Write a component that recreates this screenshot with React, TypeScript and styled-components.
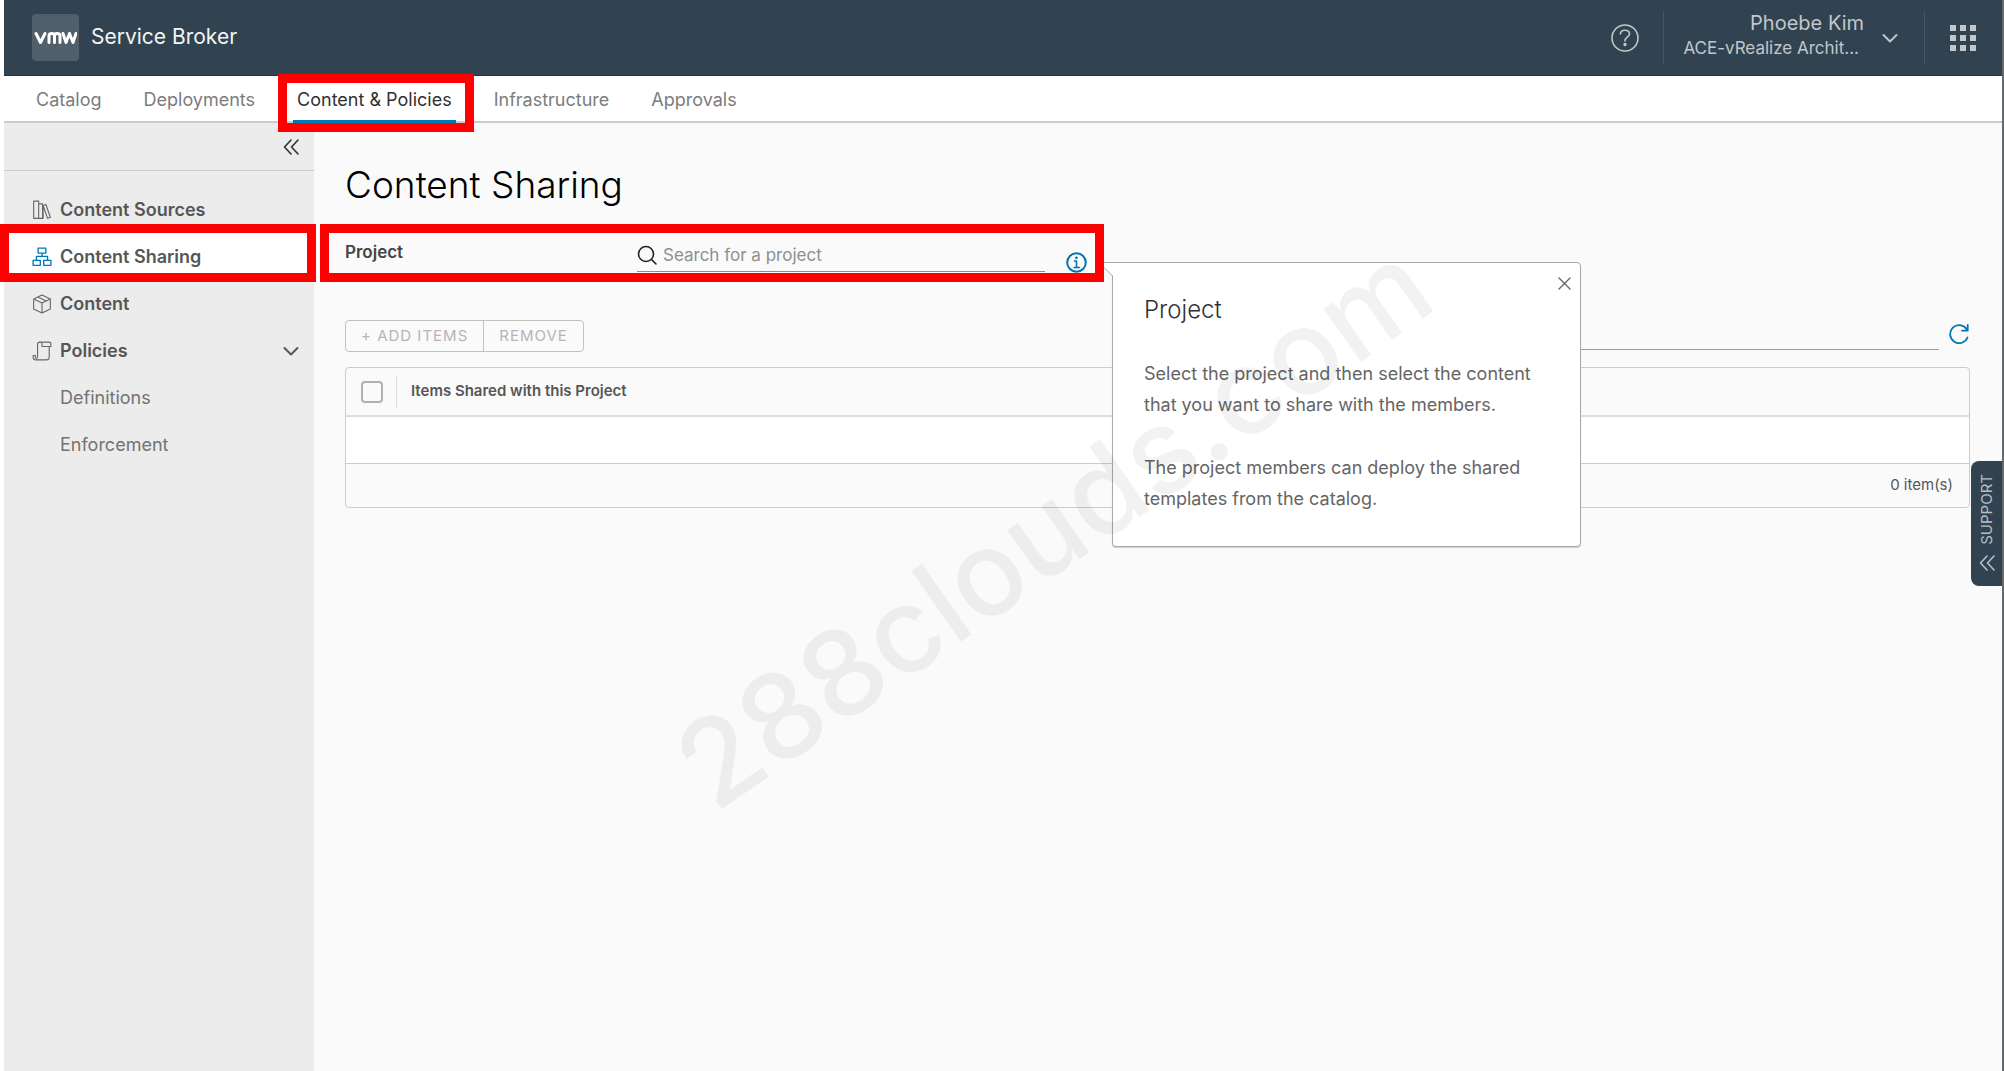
import React from "react";
import styled, { createGlobalStyle, css } from "styled-components";

const GlobalStyle = createGlobalStyle`
  *, *::before, *::after { box-sizing: border-box; }
  body {
    margin: 0;
    background: #ffffff;
    color: #565656;
    font-family: Inter, "Open Sans", "Liberation Sans", sans-serif;
    font-size: 17px;
    line-height: 24px;
  }
  button, input { font: inherit; color: inherit; }
  button { background: none; border: 0; padding: 0; cursor: pointer; }
  a { color: inherit; text-decoration: none; }
  svg { display: block; flex: none; }
`;

const Shell = styled.div`
  position: relative;
  display: flex;
  flex-direction: column;
  min-height: 100vh;
  border-left: 4px solid #ffffff;
  border-right: 2px solid #68696b;
`;

const Header = styled.header`
  display: flex;
  align-items: center;
  height: 76px;
  padding: 0 26px 0 28px;
  background: #314351;
  border-bottom: 1px solid #25333d;
  color: #c1c7cb;
`;

const Logo = styled.span`
  display: flex;
  align-items: center;
  justify-content: center;
  width: 47px;
  height: 47px;
  border-radius: 4px;
  background: #515f6b;
`;

const ProductName = styled.span`
  margin-left: 12px;
  padding-bottom: 2px;
  color: #f3f4f5;
  font-size: 21px;
`;

const HeaderActions = styled.div`
  display: flex;
  align-items: center;
  margin-left: auto;
`;

const Divider = styled.span`
  width: 1px;
  height: 52px;
  background: #475763;
`;

const HelpButton = styled.button`
  margin-right: 24px;
`;

const UserButton = styled.button`
  display: flex;
  align-items: center;
  gap: 18px;
  width: 260px;
  justify-content: flex-end;
  padding-right: 26px;
  text-align: right;
`;

const UserNames = styled.span`
  display: flex;
  flex-direction: column;
  padding-bottom: 3px;
`;

const UserName = styled.span`
  font-size: 20px;
  line-height: 25px;
`;

const OrgName = styled.span`
  padding-right: 5px;
  font-size: 17px;
  line-height: 25px;
`;

const AppsButton = styled.button`
  margin-left: 25px;
`;

const highlight = css`
  &::after {
    content: "";
    position: absolute;
    z-index: 3;
    border: 9px solid #ff0000;
    pointer-events: none;
  }
`;

const Tabs = styled.nav`
  display: flex;
  gap: 34px;
  height: 47px;
  padding: 0 28px;
  background: #ffffff;
  border-bottom: 2px solid #cccccc;
`;

const Tab = styled.a<{ $active?: boolean }>`
  position: relative;
  padding: 0 4px;
  line-height: 47px;
  font-size: 18px;
  color: ${(p) => (p.$active ? "#313131" : "#7c7c7c")};
  ${(p) =>
    p.$active &&
    css`
      box-shadow: inset 0 -3px 0 #0079b8;
      height: 47px;
      ${highlight}
      &::after {
        inset: -2px -18px -9px -15px;
      }
    `}
`;

const Body = styled.div`
  display: flex;
  flex: 1;
`;

const Sidebar = styled.aside`
  width: 310px;
  flex: none;
  background: #ececec;
`;

const CollapseBar = styled.div`
  display: flex;
  justify-content: flex-end;
  align-items: center;
  height: 48px;
  padding-right: 15px;
  border-bottom: 1px solid #cccccc;
  color: #313131;
`;

const SideNav = styled.nav`
  padding-top: 15px;
`;

const NavItem = styled.a<{ $active?: boolean; $child?: boolean }>`
  position: relative;
  display: flex;
  align-items: center;
  gap: 8px;
  height: 47px;
  padding: 0 15px 0 ${(p) => (p.$child ? 56 : 28)}px;
  color: ${(p) => (p.$child ? "#737373" : "#565656")};
  font-size: 18px;
  font-weight: ${(p) => (p.$child ? 400 : 600)};
  ${(p) =>
    p.$active &&
    css`
      background: #ffffff;
      box-shadow: -4px 0 0 #ffffff;
      ${highlight}
      &::after {
        inset: -9px -2px -2px -4px;
      }
    `}
`;

const NavIcon = styled.span<{ $active?: boolean }>`
  color: ${(p) => (p.$active ? "#0079b8" : "#666666")};
`;

const NavCaret = styled.span`
  margin-left: auto;
`;

const Main = styled.main`
  flex: 1;
  min-width: 0;
  padding: 42px 32px 0 31px;
  background: #fafafa;
`;

const PageTitle = styled.h1`
  margin: 0;
  color: #000000;
  font-size: 37px;
  font-weight: 300;
  line-height: 40px;
`;

const ProjectRow = styled.div`
  position: relative;
  display: flex;
  align-items: flex-end;
  width: 741px;
  height: 39px;
  margin-top: 28px;
  ${highlight}
  &::after {
    inset: -9px -18px -10px -25px;
  }
`;

const FieldLabel = styled.label`
  align-self: center;
  width: 292px;
  padding-bottom: 2px;
  color: #454545;
  font-weight: 600;
`;

const SearchField = styled.div`
  display: flex;
  align-items: center;
  flex: 1;
  gap: 6px;
  height: 34px;
  border-bottom: 1px solid #8c8c8c;
  color: #222222;
`;

const SearchInput = styled.input`
  flex: 1;
  min-width: 0;
  padding: 0;
  border: 0;
  outline: 0;
  background: none;
  &::placeholder {
    color: #8f8f8f;
    opacity: 1;
  }
`;

const InfoAnchor = styled.div`
  position: relative;
  width: 20px;
  height: 20px;
  margin: 0 0 0 21px;
`;

const InfoButton = styled.button`
  display: block;
  color: #0072b5;
`;

const Popover = styled.section`
  position: absolute;
  z-index: 2;
  top: 10px;
  left: 46px;
  width: 469px;
  height: 285px;
  padding: 31px 31px 0;
  background: #ffffff;
  border: 1px solid #a9a9a9;
  border-radius: 0 4px 4px 4px;
  box-shadow: 0 1px 1px #d0d0d0;
  color: #656565;
`;

const Pointer = styled.svg`
  position: absolute;
  top: -1px;
  left: -15px;
`;

const CloseButton = styled.button`
  position: absolute;
  top: 14px;
  right: 9px;
`;

const PopoverTitle = styled.h2`
  margin: 0 0 32px;
  color: #313131;
  font-size: 24px;
  font-weight: 300;
  line-height: 32px;
`;

const PopoverText = styled.p`
  margin: 0 0 32px;
  font-size: 18px;
  line-height: 31px;
`;

const Toolbar = styled.div`
  display: flex;
  align-items: flex-end;
  justify-content: space-between;
  margin-top: 46px;
`;

const ButtonGroup = styled.div`
  display: flex;
  border: 1px solid #c1c1c1;
  border-radius: 4px;
`;

const GroupButton = styled.button`
  height: 30px;
  padding: 0 15px;
  color: #b5b5b5;
  font-size: 15px;
  letter-spacing: 1px;
  text-transform: uppercase;
  & + & {
    border-left: 1px solid #c1c1c1;
  }
`;

const FilterArea = styled.div`
  display: flex;
  align-items: center;
  gap: 10px;
  padding-bottom: 2px;
`;

const FilterInput = styled.input`
  width: 400px;
  height: 32px;
  padding: 0;
  border: 0;
  border-bottom: 1px solid #9a9a9a;
  background: none;
  outline: 0;
`;

const RefreshButton = styled.button`
  margin-right: 1px;
  color: #0079b8;
`;

const Grid = styled.table`
  width: 100%;
  margin-top: 15px;
  border: 1px solid #cccccc;
  border-radius: 4px;
  border-spacing: 0;
`;

const SelectHead = styled.th`
  width: 51px;
  height: 49px;
  padding: 0;
  border-bottom: 2px solid #dddddd;
`;

const SelectBox = styled.span`
  display: flex;
  align-items: center;
  height: 32px;
  padding-left: 15px;
  border-right: 1px solid #dddddd;
`;

const CheckBox = styled.input`
  appearance: none;
  width: 22px;
  height: 22px;
  margin: 0;
  border: 2px solid #b0b0b0;
  border-radius: 4px;
  background: #fafafa;
`;

const ColumnHead = styled.th`
  padding: 0 14px 2px;
  border-bottom: 2px solid #dddddd;
  font-size: 15px;
  font-weight: 600;
  text-align: left;
`;

const EmptyCell = styled.td`
  height: 47px;
  padding: 0;
  background: #ffffff;
  border-bottom: 1px solid #cccccc;
`;

const FootCell = styled.td`
  height: 43px;
  padding: 0 16px 2px;
  font-size: 15px;
  text-align: right;
`;

const SupportTab = styled.button`
  position: absolute;
  z-index: 2;
  top: 461px;
  right: 0;
  display: flex;
  flex-direction: column;
  align-items: center;
  justify-content: space-between;
  width: 31px;
  height: 125px;
  padding: 13px 0 15px;
  border-radius: 8px 0 0 8px;
  background: #314351;
  color: #b5bfc6;
`;

const SupportText = styled.span`
  writing-mode: vertical-rl;
  transform: rotate(180deg);
  font-size: 15px;
  line-height: 20px;
`;

const Watermark = styled.div`
  position: absolute;
  z-index: 4;
  top: 525px;
  left: 1049px;
  transform: translate(-50%, -50%) rotate(-35deg);
  color: rgba(0, 0, 0, 0.05);
  font-size: 119px;
  font-weight: 500;
  line-height: 128px;
  white-space: nowrap;
  pointer-events: none;
`;

type IconProps = { size?: number; width?: number; box?: number; children: React.ReactNode };

const Icon = ({ size = 20, width = 2, box = 36, children }: IconProps) => (
  <svg
    width={size}
    height={size}
    viewBox={`0 0 ${box} ${box}`}
    fill="none"
    stroke="currentColor"
    strokeWidth={width}
    strokeLinecap="round"
    strokeLinejoin="round"
    aria-hidden="true"
  >
    {children}
  </svg>
);

const DoubleLeft = ({ size = 16 }: { size?: number }) => (
  <Icon size={size} box={16} width={1.6}>
    <path d="M8 1 1.5 8 8 15M15 1 8.5 8l6.500 7" />
  </Icon>
);

const ChevronDown = () => (
  <Icon size={16} box={16} width={2}>
    <path d="M1.500 5 8 11.500 14.500 5" />
  </Icon>
);

const BooksIcon = () => (
  <Icon>
    <path d="M3 2h9v31H3zM12 7h7v26h-7M20 10l5-2 8 23-5 2-8-23v23" />
  </Icon>
);

const SharingIcon = () => (
  <Icon width={2.4}>
    <path d="M11 2h14v9H11zM2 24h13v9H2zM21 24h13v9H21zM18 11v6M8 23v-6h20v6" />
  </Icon>
);

const BoxIcon = () => (
  <Icon>
    <path d="M18 2 33 9v18l-15 7-15-7V9zM3 9l15 7 15-7M18 16v18M10.500 5.500l15 7" />
  </Icon>
);

const PolicyIcon = () => (
  <Icon>
    <path d="M10 28V6c0-2.500 1.500-4 4-4h17c2 0 3 1.500 3 4v4H18V5c0-2-1-3-3-3M31 10v19c0 3-1.500 5-4 5H6c-3 0-4-2-4-5v-3h4v3c0 3 4 3 4 0" />
  </Icon>
);

export default function App() {
  return (
    <>
      <GlobalStyle />
      <Shell>
        <Header>
          <Logo>
            <svg width="43" height="14" viewBox="0 0 43 14" fill="none" stroke="#fff" strokeWidth="3" strokeLinecap="round" strokeLinejoin="round" role="img" aria-label="vmw">
              <path d="M2 2.500 6.500 11.500 11 2.500M15 11.500V5c0-3.500 5.500-3.500 5.500 0v6.500V5c0-3.500 5.500-3.500 5.500 0v6.500M29 2.500l3 9 3.500-9 3.500 9 3-9" />
            </svg>
          </Logo>
          <ProductName>Service Broker</ProductName>
          <HeaderActions>
            <HelpButton aria-label="Help">
              <Icon size={28} box={28} width={1.6}>
                <circle cx="14" cy="14" r="13" />
                <path d="M9.500 10c0-5 9-5 9 0 0 3-4.500 3-4.500 7" />
                <circle cx="14" cy="20.500" r="0.900" fill="currentColor" />
              </Icon>
            </HelpButton>
            <Divider />
            <UserButton>
              <UserNames>
                <UserName>Phoebe Kim</UserName>
                <OrgName>ACE-vRealize Archit...</OrgName>
              </UserNames>
              <ChevronDown />
            </UserButton>
            <Divider />
            <AppsButton aria-label="Applications">
              <svg width="26" height="26" viewBox="0 0 26 26" fill="currentColor" aria-hidden="true">
                {[0, 10, 20].map((y) => [0, 10, 20].map((x) => <rect key={`${x}-${y}`} x={x} y={y} width="6" height="6" />))}
              </svg>
            </AppsButton>
          </HeaderActions>
        </Header>

        <Tabs aria-label="Primary">
          <Tab href="#catalog">Catalog</Tab>
          <Tab href="#deployments">Deployments</Tab>
          <Tab href="#content" $active>Content &amp; Policies</Tab>
          <Tab href="#infrastructure">Infrastructure</Tab>
          <Tab href="#approvals">Approvals</Tab>
        </Tabs>

        <Body>
          <Sidebar>
            <CollapseBar>
              <button aria-label="Collapse navigation">
                <DoubleLeft />
              </button>
            </CollapseBar>
            <SideNav aria-label="Content and policies">
              <NavItem href="#sources">
                <NavIcon><BooksIcon /></NavIcon>
                Content Sources
              </NavItem>
              <NavItem href="#sharing" $active>
                <NavIcon $active><SharingIcon /></NavIcon>
                Content Sharing
              </NavItem>
              <NavItem href="#items">
                <NavIcon><BoxIcon /></NavIcon>
                Content
              </NavItem>
              <NavItem href="#policies">
                <NavIcon><PolicyIcon /></NavIcon>
                Policies
                <NavCaret><ChevronDown /></NavCaret>
              </NavItem>
              <NavItem href="#definitions" $child>Definitions</NavItem>
              <NavItem href="#enforcement" $child>Enforcement</NavItem>
            </SideNav>
          </Sidebar>

          <Main>
            <PageTitle>Content Sharing</PageTitle>
            <ProjectRow>
              <FieldLabel htmlFor="project">Project</FieldLabel>
              <SearchField>
                <Icon size={20} box={20} width={1.6}>
                  <circle cx="9" cy="9" r="7.500" />
                  <path d="m14.500 14.500 4.500 4.500" />
                </Icon>
                <SearchInput id="project" type="text" placeholder="Search for a project" />
              </SearchField>
              <InfoAnchor>
                <InfoButton aria-label="About projects">
                  <Icon size={21} box={21} width={2}>
                    <circle cx="10.500" cy="10.500" r="9.300" />
                    <path d="M8.500 9h2v6.500M8 15.500h5.500" strokeWidth="1.600" />
                    <circle cx="10.300" cy="5.800" r="0.900" fill="currentColor" strokeWidth="1" />
                  </Icon>
                </InfoButton>
                <Popover aria-label="Project help">
                  <Pointer width="16" height="16" viewBox="0 0 16 16" aria-hidden="true">
                    <path d="M1 1h15v14z" fill="#ffffff" />
                    <path d="M16 .500H1l13.500 13.500" fill="none" stroke="#a9a9a9" />
                  </Pointer>
                  <CloseButton aria-label="Close">
                    <Icon size={13} box={13} width={1.4}>
                      <path d="m1 1 11 11M12 1 1 12" />
                    </Icon>
                  </CloseButton>
                  <PopoverTitle>Project</PopoverTitle>
                  <PopoverText>Select the project and then select the content that you want to share with the members.</PopoverText>
                  <PopoverText>The project members can deploy the shared templates from the catalog.</PopoverText>
                </Popover>
              </InfoAnchor>
            </ProjectRow>

            <Toolbar>
              <ButtonGroup>
                <GroupButton disabled>+ Add items</GroupButton>
                <GroupButton disabled>Remove</GroupButton>
              </ButtonGroup>
              <FilterArea>
                <FilterInput type="text" aria-label="Filter items" />
                <RefreshButton aria-label="Refresh">
                  <Icon size={20} box={20} width={1.8}>
                    <path d="M18.500 13.500A9 9 0 1 1 17.500 5M18.700 1v5.700H13" />
                  </Icon>
                </RefreshButton>
              </FilterArea>
            </Toolbar>

            <Grid>
              <thead>
                <tr>
                  <SelectHead>
                    <SelectBox><CheckBox type="checkbox" aria-label="Select all items" /></SelectBox>
                  </SelectHead>
                  <ColumnHead>Items Shared with this Project</ColumnHead>
                </tr>
              </thead>
              <tbody>
                <tr><EmptyCell colSpan={2} /></tr>
              </tbody>
              <tfoot>
                <tr><FootCell colSpan={2}>0 item(s)</FootCell></tr>
              </tfoot>
            </Grid>
          </Main>
        </Body>

        <SupportTab>
          <SupportText>SUPPORT</SupportText>
          <DoubleLeft />
        </SupportTab>
        <Watermark aria-hidden="true">288clouds.com</Watermark>
      </Shell>
    </>
  );
}
